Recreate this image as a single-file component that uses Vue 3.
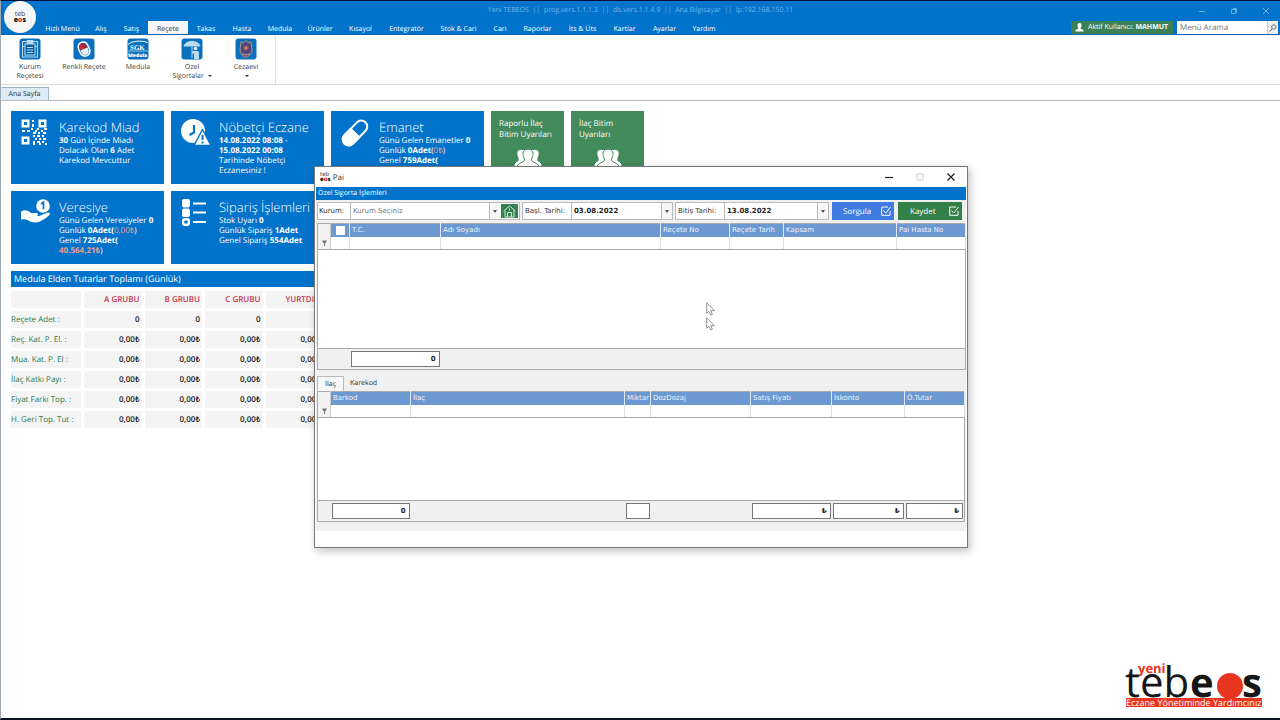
<script setup>
import { ref } from 'vue'

const menu = [
  ['Hızlı Menü', 49], ['Alış', 28], ['Satış', 33], ['Reçete', 40], ['Takas', 36],
  ['Hasta', 36], ['Medula', 40], ['Ürünler', 40], ['Kısayol', 41], ['Entegratör', 51],
  ['Stok & Cari', 53], ['Cari', 30], ['Raporlar', 45], ['İts & Üts', 45],
  ['Kartlar', 39], ['Ayarlar', 41], ['Yardım', 38],
]
const active = ref('Reçete')
const start = ref('03.08.2022')
const end = ref('13.08.2022')
const search = ref('')

const groups = ['A GRUBU', 'B GRUBU', 'C GRUBU', 'YURTDIŞI']
const totals = [
  ['Reçete Adet :', '0'], ['Reç. Kat. P. El. :', '0,00₺'], ['Mua. Kat. P. El :', '0,00₺'],
  ['İlaç Katkı Payı :', '0,00₺'], ['Fiyat Farkı Top. :', '0,00₺'], ['H. Geri Top. Tut :', '0,00₺'],
]
const patientCols = [
  ['T.C.', 91], ['Adı Soyadı', 220], ['Reçete No', 69], ['Reçete Tarih', 54], ['Kapsam', 113], ['Pai Hasta No', 69],
]
const drugCols = [
  ['Barkod', 80, '0'], ['İlaç', 214, null], ['Miktar', 26, ''], ['DozDozaj', 100, null],
  ['Satış Fiyatı', 81, '₺'], ['İskonto', 73, '₺'], ['Ö.Tutar', 60, '₺'],
]
</script>

<template>
  <div class="app">
    <header class="top">
      <div class="round-logo"><span>teb</span><b>e<i>o</i>s</b></div>
      <div class="title-row">
        <h1>Yeni TEBEOS&nbsp; ||&nbsp; prog.vers.1.1.1.3&nbsp; ||&nbsp; db.vers.1.1.4.9&nbsp; ||&nbsp; Ana Bilgisayar&nbsp; ||&nbsp; Ip:192.168.150.11</h1>
        <div class="win-btns">
          <button aria-label="Küçült"><svg width="8" height="8"><path d="M1 4.5h6" /></svg></button>
          <button aria-label="Geri yükle"><svg width="8" height="8"><path d="M1.5 2.5h4v4h-4zM3 2.5v-1h3.500v4H5.500" /></svg></button>
          <button aria-label="Kapat"><svg width="8" height="8"><path d="M1 1l6 6M7 1l-6 6" /></svg></button>
        </div>
      </div>
      <div class="menu-row">
        <nav>
          <button v-for="[name, w] in menu" :key="name" :class="{ on: active === name }" :style="{ width: w + 'px' }" @click="active = name">{{ name }}</button>
        </nav>
        <div class="user">
          <svg width="9" height="9" viewBox="0 0 9 9"><path fill="#fff" d="M4.500 0C6 0 6.600 1 6.500 2.400 6.400 3.600 6 4.200 5.600 4.700v.9L8.500 7v1.500H.5V7l2.900-1.400v-.9C3 4.200 2.600 3.600 2.500 2.400 2.400 1 3 0 4.500 0z" /></svg>
          <span>Aktif Kullanıcı: <b>MAHMUT</b></span>
        </div>
        <div class="search">
          <input v-model="search" aria-label="Menü Arama" placeholder="Menü Arama" />
          <button aria-label="Ara"><svg width="8" height="8" viewBox="0 0 8 8"><path d="M3.200 4.800L.8 7.300" stroke="#555" /><circle cx="4.800" cy="3" r="2.200" fill="none" stroke="#555" stroke-width=".8" /></svg></button>
        </div>
      </div>
    </header>

    <div class="ribbon">
      <button>
        <svg width="22" height="22" viewBox="0 0 22 22"><rect x=".5" y=".5" width="21" height="21" rx="3" fill="#0a6fbd" /><g fill="none" stroke="#b9dcf3"><rect x="3.500" y="3.500" width="15" height="15.500" /><rect x="6" y="6" width="10" height="11" fill="#0a5fa8" /><path d="M8 2.500h6v3H8z" fill="#b9dcf3" /><path d="M8 9.500h6M8 12h6M8 14.500h6M3.500 8.500h2M16 8.500h2" /></g></svg>
        <span>Kurum<br />Reçetesi</span>
      </button>
      <button>
        <svg width="22" height="22" viewBox="0 0 22 22"><rect x=".5" y=".5" width="21" height="21" rx="3" fill="#0a6fbd" /><g transform="rotate(-24 11 11)"><rect x="6" y="3.800" width="10" height="14.500" rx="5" fill="#0a6fbd" stroke="#fff" stroke-width="1.500" /><path d="M11 5a3.600 3.600 0 0 0-3.600 3.600V11H11z" fill="#cf2438" /><path d="M11 5a3.600 3.600 0 0 1 3.600 3.600V11H11z" fill="#9c2546" /><path d="M7.400 11h7.200v2.500a3.600 3.600 0 0 1-7.200 0z" fill="#e8f2fb" /></g></svg>
        <span>Renkli Reçete</span>
      </button>
      <button>
        <svg width="22" height="22" viewBox="0 0 22 22"><rect x=".5" y=".5" width="21" height="21" rx="3" fill="#0a6fbd" /><path d="M1 6.500C5 3 14 2 20.500 4.500" fill="none" stroke="#fff" /><path d="M1 13h20" stroke="#cfe6f7" stroke-width=".7" /><text x="3" y="12" class="serif-mark">SGK</text><text x="1" y="19" class="black-mark">Medula</text></svg>
        <span>Medula</span>
      </button>
      <button>
        <svg width="22" height="22" viewBox="0 0 22 22"><rect x=".5" y=".5" width="21" height="21" rx="3" fill="#0a6fbd" /><path d="M2.500 8.500C4 4.500 7 3 11 3s7 1.500 8.500 5.500z" fill="#b9dcf3" /><path d="M11 8.500V20" stroke="#b9dcf3" stroke-width="1" /><circle cx="14.500" cy="10.500" r="1.800" fill="#e4f2fb" /><path d="M11 13h5.500q1.500 0 1.500 1.500V21h-5v-5.500h-2z" fill="#b9dcf3" /></svg>
        <span>Özel<br />Sigortalar <em></em></span>
      </button>
      <button>
        <svg width="22" height="22" viewBox="0 0 22 22"><rect x=".5" y=".5" width="21" height="21" rx="3" fill="#0a6fbd" /><path d="M6 4l3 .5L11 2.500l2 2 3-.5 1 8q0 5-6 7.500Q5 17 5 12z" fill="#5f4a7c" stroke="#c3a07a" stroke-width=".8" /><circle cx="11" cy="10" r="3.800" fill="#8c4257" stroke="#274b93" stroke-width="1.300" /><path d="M9 10h4M11 8v4M7 16q4 2 8 0" stroke="#d0b184" stroke-width=".8" fill="none" /></svg>
        <span>Cezaevi<br /><em></em></span>
      </button>
    </div>

    <div class="doc-tabs"><button>Ana Sayfa</button></div>

    <main>
      <section class="tiles">
        <article class="tile">
          <svg width="26" height="26" viewBox="0 0 26 26" fill="none" stroke="#fff" stroke-width="2.400"><path d="M1.700 1.700h5.600v5.600H1.700zM18.700 1.700h5.600v5.600h-5.600zM1.700 18.700h5.600v5.600H1.700z" /><path stroke-width="2" d="M12 1v2M12 5v3M1 12h3M6 12h3M14 12h2M10 10h2M16 10h2M20 12h2M23 10h3M12 14h3M17 14h2M22 14h3M12 17h2M16 17h3M21 17h2M14 20h2M18 20h2M22 20h3M12 23h2M16 23h3M21 23h2M24 25h2M18 25h2M12 25h2" /></svg>
          <div><h2>Karekod Miad</h2><p><b>30</b> Gün İçinde Miadı<br />Dolacak Olan <b>6</b> Adet<br />Karekod Mevcuttur</p></div>
        </article>
        <article class="tile">
          <svg width="30" height="28" viewBox="0 0 30 28"><circle cx="12" cy="12" r="12" fill="#fff" /><path d="M13 6v7.500L8.500 16" fill="none" stroke="#0273ca" stroke-width="2.200" /><path d="M21.500 10.500L30 26.500H13z" fill="#fff" stroke="#0273ca" stroke-width="1.500" stroke-linejoin="round" /><path d="M21.500 16v5M21.500 22.500v2" stroke="#0273ca" stroke-width="2" /></svg>
          <div><h2>Nöbetçi Eczane</h2><p><b>14.08.2022 08:08</b> -<br /><b>15.08.2022 00:08</b><br />Tarihinde Nöbetçi<br />Eczanesiniz !</p></div>
        </article>
        <article class="tile">
          <svg width="28" height="28" viewBox="0 0 28 28"><g transform="rotate(44 14 14)"><rect x="8" y="-1" width="12" height="30" rx="6" fill="none" stroke="#fff" stroke-width="2" /><path d="M7 13h14v10a7 7 0 0 1-14 0z" fill="#fff" /></g></svg>
          <div><h2>Emanet</h2><p>Günü Gelen Emanetler <b>0</b><br />Günlük <b>0Adet</b>(<i>0₺</i>)<br />Genel <b>759Adet(</b></p></div>
        </article>
        <article v-for="t in ['Raporlu İlaç Bitim Uyarıları', 'İlaç Bitim Uyarıları']" :key="t" class="tile green">
          <p>{{ t }}</p>
          <svg width="28" height="22" viewBox="0 0 28 22" fill="#fff"><path d="M8.500 1Q3.500 0 3.300 4.500q0 3 1.400 5 .3 2-.8 2.800Q0 14 0 20h28q0-6-3.900-7.700-1.100-.8-.8-2.800 1.400-2 1.400-5Q24.500 0 19.500 1z" /><path stroke="#438a5c" d="M14 .3c4.200 0 5.500 2.700 4.800 6.200-.3 2-1.400 3-1.400 4.500 0 2.500 7.600 2.500 8.100 8V22h-23v-3c.5-5.500 8.100-5.500 8.100-8 0-1.500-1.100-2.500-1.400-4.500C8.500 3 9.800.3 14 .3z" /></svg>
        </article>
        <article class="tile">
          <svg width="30" height="26" viewBox="0 0 30 26" fill="#fff"><circle cx="22" cy="7" r="6.800" /><path d="M20 5l2.500-1.800v7" fill="none" stroke="#0273ca" stroke-width="1.700" /><path d="M0 12.500q6-3 10 1.500h6q2 1 0 3h-5 7l9-3.500q3 0 1.500 2.500-8 7-13 7.500-6 0-9-2.500-3-1-6.500-.5z" /></svg>
          <div><h2>Veresiye</h2><p>Günü Gelen Veresiyeler <b>0</b><br />Günlük <b>0Adet(</b><i>0,00₺</i>)<br />Genel <b>725Adet(</b><br /><b><i>40.564,21₺</i></b>)</p></div>
        </article>
        <article class="tile">
          <svg width="26" height="28" viewBox="0 0 26 28"><rect x="1" y="0" width="8" height="8.500" rx="2" fill="#fff" /><rect x="1" y="9.500" width="8" height="8.500" rx="2" fill="#fff" /><rect x="2.200" y="20.200" width="5.600" height="5.600" rx="1.500" fill="none" stroke="#fff" stroke-width="2.400" /><path d="M12 4.500h13M12 13.500h13M12 23h13" stroke="#fff" stroke-width="2.200" /></svg>
          <div><h2>Sipariş İşlemleri</h2><p>Stok Uyarı <b>0</b><br />Günlük Sipariş <b>1Adet</b><br />Genel Sipariş <b>554Adet</b></p></div>
        </article>
      </section>

      <section class="totals">
        <h3>Medula Elden Tutarlar Toplamı (Günlük)</h3>
        <table>
          <thead><tr><th></th><th v-for="g in groups" :key="g">{{ g }}</th></tr></thead>
          <tbody>
            <tr v-for="[label, v] in totals" :key="label"><th>{{ label }}</th><td v-for="g in groups" :key="g">{{ v }}</td></tr>
          </tbody>
        </table>
      </section>
    </main>

    <svg class="brand" width="140" height="60" viewBox="0 -10 140 60">
      <text x="13" y="13" class="b-yeni">yeni</text>
      <text x="0" y="37" class="b-teb">teb</text>
      <text x="65" y="37" class="b-eos">e</text>
      <circle cx="105" cy="26" r="13" fill="#e8351f" />
      <text x="117" y="37" class="b-eos">s</text>
      <rect x="1" y="38" width="136" height="9" fill="#e8351f" />
      <text x="1" y="46" class="b-tag">Eczane Yönetiminde Yardımcınız</text>
    </svg>

    <div class="dialog" role="dialog" aria-label="Pai">
      <div class="dlg-title">
        <div class="mini-logo"><span>teb</span><b>e<i>o</i>s</b></div>
        <span>Pai</span>
        <div class="dlg-btns">
          <button aria-label="Küçült"><svg width="8" height="8"><path d="M0 4.500h8" stroke="#222" stroke-width="1.200" /></svg></button>
          <button aria-label="Büyüt" disabled><svg width="8" height="8"><path d="M1 1h6v6H1z" fill="none" stroke="#ccc" /></svg></button>
          <button aria-label="Kapat"><svg width="8" height="8"><path d="M.5 .5l7 7M7.500 .5l-7 7" stroke="#222" stroke-width="1.200" /></svg></button>
        </div>
      </div>
      <h2 class="dlg-head">Özel Sigorta İşlemleri</h2>
      <div class="dlg-body">
        <div class="filters">
          <div class="field kurum">
            <label for="kurum">Kurum:</label>
            <select id="kurum"><option>Kurum Seçiniz</option></select>
            <span class="arrow"></span>
            <button class="home" aria-label="Kurumlar"><svg width="13" height="13" viewBox="0 0 13 13" fill="none" stroke="#d5eadb"><path d="M.7 6L6.500 1l5.800 5M2 5.500V12h9V5.500" /><path d="M4.500 12V7.500h4V12M6.500 3.500v2" /></svg></button>
          </div>
          <div class="field date">
            <label for="d1">Başl. Tarihi:</label>
            <input id="d1" v-model="start" />
            <button class="arrow" aria-label="Başlangıç takvimi"></button>
          </div>
          <div class="field date">
            <label for="d2">Bitiş Tarihi:</label>
            <input id="d2" v-model="end" />
            <button class="arrow" aria-label="Bitiş takvimi"></button>
          </div>
          <button class="act query"><span>Sorgula</span><svg width="10" height="10" viewBox="0 0 10 10" fill="none" stroke="#fff"><path d="M7 1H.7v8.300H9V5" /><path d="M2.500 4.500L4.800 7l4.700-6" /></svg></button>
          <button class="act save"><span>Kaydet</span><svg width="10" height="10" viewBox="0 0 10 10" fill="none" stroke="#fff"><path d="M7 1H.7v8.300H9V5" /><path d="M2.500 4.500L4.800 7l4.700-6" /></svg></button>
        </div>

        <table class="grid patients">
          <colgroup><col class="c-ind" /><col class="c-chk" /><col v-for="[n, w] in patientCols" :key="n" :style="{ width: w + 'px' }" /></colgroup>
          <thead><tr><th class="ind"></th><th><input type="checkbox" aria-label="Tümünü seç" /></th><th v-for="[n] in patientCols" :key="n">{{ n }}</th></tr></thead>
          <tbody>
            <tr class="filter"><td class="ind"><svg width="5" height="6" viewBox="0 0 5 6"><path d="M.5 .5h4v1.500L3 3.500V6H2V3.500L.5 2z" fill="#777" /></svg></td><td></td><td v-for="[n] in patientCols" :key="n"></td></tr>
            <tr class="blank"><td colspan="8"></td></tr>
          </tbody>
          <tfoot><tr><td></td><td></td><td><output>0</output></td><td colspan="5"></td></tr></tfoot>
        </table>

        <div class="tabs" role="tablist">
          <button role="tab" class="on">İlaç</button><button role="tab">Karekod</button>
        </div>

        <table class="grid drugs">
          <colgroup><col class="c-ind" /><col v-for="[n, w] in drugCols" :key="n" :style="{ width: w + 'px' }" /></colgroup>
          <thead><tr><th class="ind"></th><th v-for="[n] in drugCols" :key="n">{{ n }}</th></tr></thead>
          <tbody>
            <tr class="filter"><td class="ind"><svg width="5" height="6" viewBox="0 0 5 6"><path d="M.5 .5h4v1.500L3 3.500V6H2V3.500L.5 2z" fill="#777" /></svg></td><td v-for="[n] in drugCols" :key="n"></td></tr>
            <tr class="blank"><td colspan="8"></td></tr>
          </tbody>
          <tfoot><tr><td></td><td v-for="[n, , v] in drugCols" :key="n"><output v-if="v !== null">{{ v }}</output></td></tr></tfoot>
        </table>
      </div>
      <svg v-for="k in 2" :key="k" :class="['cursor', 'k' + k]" width="10" height="14" viewBox="0 0 10 14"><path d="M.7 .8v10.500l2.300-2 1.700 3.700 1.700-.8L4.800 8.700h3.700z" fill="#fff" stroke="#777" stroke-width=".8" /></svg>
    </div>
  </div>
</template>

<style>
body { margin: 0; background: #fff; }
</style>

<style scoped>
* { box-sizing: border-box; }
button, input, select { font: inherit; color: inherit; border: 0; padding: 0; margin: 0; background: none; border-radius: 0; outline: 0; text-rendering: inherit; }
h1, h2, h3, p { margin: 0; font-weight: 400; }
i, em { font-style: normal; }
svg { display: block; flex: none; }
.app { position: relative; min-height: 100vh; display: flex; flex-direction: column; font-family: "Open Sans", "Noto Sans", sans-serif; font-size: 7px; color: #333; text-rendering: geometricPrecision; border-top: 1px solid #04123a; border-bottom: 2px solid #0b1420; border-left: 1px solid #9fa9b3; overflow: hidden; }

.top { position: relative; background: #0273ca; height: 34px; border-bottom: 1px solid #0a62ae; display: flex; flex-direction: column; }
.round-logo { position: absolute; left: 3px; top: 0; width: 32px; height: 32px; padding-top: 1px; border-radius: 50%; background: #f6f6f8; display: flex; flex-direction: column; align-items: center; justify-content: center; font-size: 7px; line-height: 6px; color: #444; z-index: 1; }
.round-logo b, .mini-logo b { color: #111; font-weight: 800; }
.round-logo i, .mini-logo i { color: #e03325; }
.title-row { height: 20px; display: grid; grid-template-columns: 1fr auto 1fr; align-items: center; }
h1 { grid-column: 2; font-size: 7px; line-height: 18px; color: #74b5ec; }
.win-btns { display: flex; justify-content: flex-end; gap: 24px; padding-right: 10px; }
.win-btns svg { fill: none; stroke: #69aee6; }
.menu-row { flex: 1; display: flex; align-items: stretch; padding-left: 37px; }
nav { display: flex; flex: 1; }
nav button { color: #fff; padding-top: 4px; white-space: nowrap; }
nav button.on { background: #f5f6f7; color: #333; }
.user { display: flex; align-items: center; gap: 4px; width: 102px; padding-left: 4px; margin-right: 4px; background: #3a8158; color: #fff; white-space: nowrap; }
.search { display: flex; width: 101px; margin-right: 2px; background: #fff; }
.search input { width: 90px; padding-left: 3px; font-size: 8px; }
.search input::placeholder { color: #777; opacity: 1; }
.search button { flex: 1; display: grid; place-items: center; background: #eee; border-left: 1px solid #ccc; }

.ribbon { display: flex; align-self: flex-start; height: 48px; margin-top: 1px; padding: 2px 0 0 2px; border-right: 1px solid #ddd; }
.ribbon button { width: 54px; display: flex; flex-direction: column; align-items: center; justify-content: flex-start; line-height: 9px; color: #444; white-space: nowrap; }
.ribbon button span { margin-top: 3px; }
.ribbon button:last-child { margin-right: 2px; }
.ribbon em { display: inline-block; border: 2px solid transparent; border-top-color: #333; border-bottom: 0; vertical-align: middle; margin-left: 2px; }
.serif-mark { font: 700 7px "Liberation Serif", serif; fill: #fff; }
.black-mark { font: 800 5px "Open Sans", sans-serif; fill: #fff; }

.doc-tabs { border-top: 1px solid #dcdcdc; border-bottom: 1px solid #b4bcc4; height: 17px; display: flex; align-items: stretch; padding-top: 2px; }
.doc-tabs button { width: 48px; background: #dcebf5; border: 1px solid #9fb9cc; border-width: 1px 1px 0 0; color: #333; }

main { flex: 1; padding: 10px 10px 0; }
.tiles { display: grid; grid-template-columns: repeat(3, 153px) 73px 73px; grid-auto-rows: 73px; gap: 7px; }
.tile { background: #0273ca; color: #fff; padding: 8px 0 0 10px; display: flex; overflow: hidden; }
.tile > div { flex: none; width: 105px; margin-left: auto; }
.tile h2 { font-size: 13px; line-height: 17px; font-weight: 300; white-space: nowrap; }
.tile p { font-size: 8px; line-height: 10px; white-space: nowrap; }
.tile i { color: #e9a08f; }
.tile.green { background: #438a5c; display: block; padding: 7px 8px 0; }
.tile.green p { line-height: 11px; white-space: normal; }
.tile.green svg { margin: 9px auto 0 15px; }

.totals { width: 322px; margin-top: 7px; }
.totals h3 { background: #0273ca; color: #fff; font-size: 9px; line-height: 16px; padding-left: 3px; }
.totals table { border-collapse: separate; border-spacing: 3px; margin: 1px 0 0 -3px; table-layout: fixed; width: 318px; font-size: 8px; }
.totals th, .totals td { background: #f4f4f4; padding: 0 2px 0 0; text-align: right; height: 17px; line-height: 16px; white-space: nowrap; }
.totals thead th { color: #c43250; font-weight: 600; }
.totals thead th:first-child { width: 70px; }
.totals tbody th { text-align: left; color: #2f7a4a; font-weight: 400; }
.totals td { color: #222; font-weight: 600; }

.brand { position: absolute; right: 15px; bottom: 8px; }
.b-yeni { font: 700 13px "Open Sans", sans-serif; fill: #e8351f; }
.b-teb { font: 500 42px "Open Sans", sans-serif; fill: #161616; }
.b-eos { font: 700 40px "Open Sans", sans-serif; fill: #161616; }
.b-tag { font: 400 9px "Open Sans", sans-serif; fill: #fff; }

.dialog { position: absolute; left: 313px; top: 165px; width: 654px; background: #fff; border: 1px solid #777; box-shadow: 2px 3px 8px rgba(0, 0, 0, .25); padding: 0 1px 16px; color: #333; }
.dlg-title { height: 20px; display: flex; align-items: center; gap: 2px; padding-left: 4px; font-size: 8px; }
.mini-logo { display: flex; flex-direction: column; font-size: 6px; line-height: 5px; }
.dlg-btns { margin-left: auto; display: flex; gap: 23px; padding-right: 11px; }
.dlg-head { background: #0273ca; color: #fff; font-size: 7px; line-height: 13px; padding-left: 2px; }
.dlg-body { background: #f0f0f0; padding: 2px 1px 9px; font-family: "DejaVu Sans", sans-serif; }
.filters { display: flex; height: 18px; align-items: stretch; }
.field { display: flex; border: 1px solid #bbb; background: #fff; align-items: stretch; margin-right: 2px; }
.kurum { width: 203px; }
.date { width: 151px; }
.date + .date { width: 154px; margin-right: 3px; }
.field label { display: flex; align-items: center; padding: 0 2px; border-right: 1px solid #bbb; white-space: nowrap; }
.kurum label { width: 33px; padding: 0 1px; }
.date label { width: 49px; }
.field select { flex: 1; min-width: 0; appearance: none; padding-left: 2px; color: #777; }
.field input { flex: 1; min-width: 0; padding-left: 2px; font-weight: 700; color: #222; }
.arrow { width: 11px; display: grid; place-items: center; border-left: 1px solid #bbb; background: #f6f6f6; }
.arrow::after { content: ""; border: 2px solid transparent; border-top: 3px solid #555; border-bottom: 0; }
.home { width: 17px; display: grid; place-items: center; background: #35804f; margin: 1px; }
.act { display: flex; align-items: center; justify-content: space-between; padding: 0 3px 0 11px; color: #fff; font-family: "Open Sans", sans-serif; font-size: 8px; }
.query { width: 62px; background: #3f7be0; margin-right: 4px; }
.save { width: 64px; background: #338048; padding-left: 12px; }

.grid { width: 100%; table-layout: fixed; border-collapse: collapse; background: #fff; border: 1px solid #aaa; }
.grid.patients { margin-top: 3px; }
.c-ind { width: 13px; }
.c-chk { width: 19px; }
.grid th, .grid td { padding: 0; }
.grid th { height: 13px; background: #6c99d2; color: #edf3fb; font-weight: 400; text-align: left; padding-left: 2px; border-right: 1px solid #dfe8f5; white-space: nowrap; overflow: hidden; }
.grid .ind { background: #f2f2f2; border-right: 1px solid #ccc; padding: 0; }
.ind svg { margin: 0 auto; }
.grid th input { appearance: none; display: block; width: 9px; height: 9px; margin: 0 0 0 3px; background: #fff; }
.filter td { height: 13px; border-right: 1px solid #ddd; border-bottom: 1px solid #aaa; }
.blank td { height: 99px; }
.drugs .blank td { height: 83px; }
.grid tfoot tr { background: #f0f0f0; border-top: 1px solid #aaa; }
.grid tfoot td { height: 21px; }
.grid output { display: block; height: 16px; margin: 0 1px; border: 1px solid #777; background: #fff; font-weight: 700; line-height: 14px; text-align: right; padding-right: 3px; color: #222; }
.tabs { display: flex; height: 21px; padding-top: 6px; font-family: "Open Sans", sans-serif; }
.tabs button { padding: 0 6px; }
.tabs .on { width: 27px; background: #f7f7f7; border: 1px solid #bbb; border-bottom: 0; }
.cursor { position: absolute; left: 391px; top: 135px; }
.k2 { top: 150px; }
</style>
